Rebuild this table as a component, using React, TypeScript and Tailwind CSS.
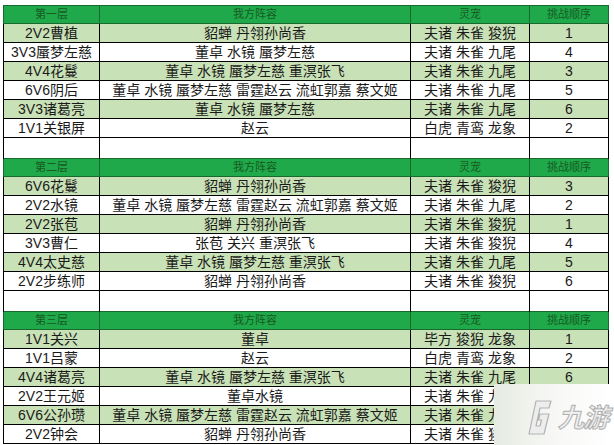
import React from 'react'

type Row = { name: string; team: string; pets: string; order: string }

const sections: { title: string; rows: Row[] }[] = [
    {
        title: '第一层',
        rows: [
            { name: '2V2曹植', team: '貂蝉 丹翎孙尚香', pets: '夫诸 朱雀 狻猊', order: '1' },
            { name: '3V3蜃梦左慈', team: '董卓 水镜 蜃梦左慈', pets: '夫诸 朱雀 九尾', order: '4' },
            { name: '4V4花鬘', team: '董卓 水镜 蜃梦左慈 重溟张飞', pets: '夫诸 朱雀 九尾', order: '3' },
            { name: '6V6阴后', team: '董卓 水镜 蜃梦左慈 雷霆赵云 流虹郭嘉 蔡文姬', pets: '夫诸 朱雀 九尾', order: '5' },
            { name: '3V3诸葛亮', team: '董卓 水镜 蜃梦左慈', pets: '夫诸 朱雀 九尾', order: '6' },
            { name: '1V1关银屏', team: '赵云', pets: '白虎 青鸾 龙象', order: '2' },
        ],
    },
    {
        title: '第二层',
        rows: [
            { name: '6V6花鬘', team: '貂蝉 丹翎孙尚香', pets: '夫诸 朱雀 狻猊', order: '3' },
            { name: '2V2水镜', team: '董卓 水镜 蜃梦左慈 雷霆赵云 流虹郭嘉 蔡文姬', pets: '夫诸 朱雀 九尾', order: '2' },
            { name: '2V2张苞', team: '貂蝉 丹翎孙尚香', pets: '夫诸 朱雀 狻猊', order: '1' },
            { name: '3V3曹仁', team: '张苞 关兴 重溟张飞', pets: '夫诸 朱雀 狻猊', order: '4' },
            { name: '4V4太史慈', team: '董卓 水镜 蜃梦左慈 重溟张飞', pets: '夫诸 朱雀 九尾', order: '5' },
            { name: '2V2步练师', team: '貂蝉 丹翎孙尚香', pets: '夫诸 朱雀 狻猊', order: '6' },
        ],
    },
    {
        title: '第三层',
        rows: [
            { name: '1V1关兴', team: '董卓', pets: '毕方 狻猊 龙象', order: '1' },
            { name: '1V1吕蒙', team: '赵云', pets: '白虎 青鸾 龙象', order: '2' },
            { name: '4V4诸葛亮', team: '董卓 水镜 蜃梦左慈 重溟张飞', pets: '夫诸 朱雀 九尾', order: '6' },
            { name: '2V2王元姬', team: '董卓水镜', pets: '夫诸 朱雀 九尾', order: '3' },
            { name: '6V6公孙瓒', team: '董卓 水镜 蜃梦左慈 雷霆赵云 流虹郭嘉 蔡文姬', pets: '夫诸 朱雀 九尾', order: '4' },
            { name: '2V2钟会', team: '貂蝉 丹翎孙尚香', pets: '夫诸 朱雀 狻猊', order: '5' },
        ],
    },
]

const font = "font-['Liberation_Sans','Noto_Sans_CJK_SC',sans-serif]"
const headCell = 'h-[18px] p-0 border border-[#17692e] bg-[#1fa94a] text-[11px] font-normal text-[#175a22] leading-none text-center'
const cell = 'h-[19px] p-0 border border-black text-[14px] leading-none text-center text-[#1a1a1a] whitespace-nowrap'

function Watermark() {
    return (
        <div className="absolute left-[494px] top-[384px] w-[120px] h-[61px] bg-gradient-to-r from-[#e6ebe2] via-[#f7f8f6] to-white flex items-center pl-[34px] pt-[6px] gap-[6px]">
            <svg width="24" height="36" viewBox="0 0 24 36">
                <path
                    d="M8 1 L23 1 L21 8 L12 8 L8 26 L12 26 L13.5 20 L10.5 20 L12 14 L21 14 L16 34 L1 34 Z"
                    fill="#ededed"
                    stroke="#b3b3b3"
                    strokeWidth="1.2"
                    strokeLinejoin="round"
                />
            </svg>
            <span
                className={`text-[26px] font-bold italic text-[#eeeeee] leading-none tracking-[-1px] ${font}`}
                style={{ WebkitTextStroke: '1px #b0b0b0' }}
            >
                九游
            </span>
        </div>
    )
}

export default function App() {
    return (
        <div className={`relative w-[614px] h-[445px] bg-white overflow-hidden pl-[3px] pt-[5px] ${font}`}>
            <table className="border-collapse table-fixed w-[605px]">
                <colgroup>
                    <col className="w-[96px]" />
                    <col className="w-[311px]" />
                    <col className="w-[119px]" />
                    <col className="w-[79px]" />
                </colgroup>
                <tbody>
                    {sections.map((s, si) => (
                        <React.Fragment key={s.title}>
                            {si > 0 && (
                                <tr>
                                    <td className="h-[21px] p-0 border-x border-black" />
                                    <td className="h-[21px] p-0 border-x border-black" />
                                    <td className="h-[21px] p-0 border-x border-black" />
                                    <td className="h-[21px] p-0 border-x border-black" />
                                </tr>
                            )}
                            <tr>
                                <th className={headCell}>{s.title}</th>
                                <th className={headCell}>我方阵容</th>
                                <th className={headCell}>灵宠</th>
                                <th className={headCell}>挑战顺序</th>
                            </tr>
                            {s.rows.map((r, i) => {
                                const bg = i % 2 === 0 ? 'bg-[#c9e1b6]' : 'bg-white'
                                return (
                                    <tr key={r.name} className={bg}>
                                        <td className={cell}>{r.name}</td>
                                        <td className={cell}>{r.team}</td>
                                        <td className={cell}>{r.pets}</td>
                                        <td className={`${cell} text-[13px]`}>{r.order}</td>
                                    </tr>
                                )
                            })}
                        </React.Fragment>
                    ))}
                </tbody>
            </table>
            <Watermark />
        </div>
    )
}
